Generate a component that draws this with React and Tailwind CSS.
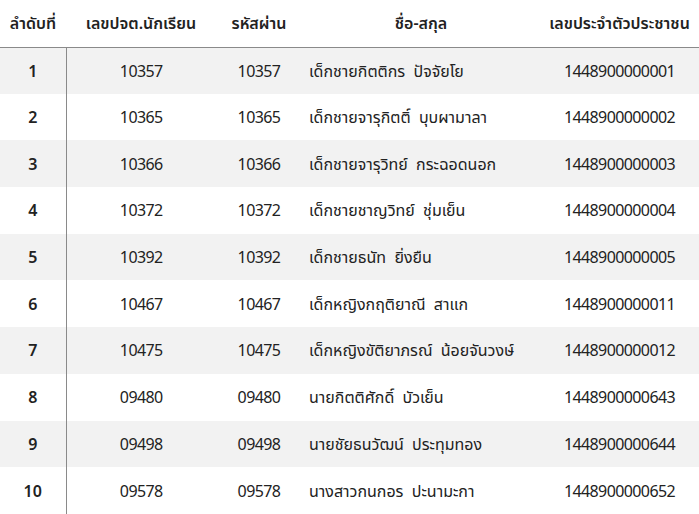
const rows = [
  ["1", "10357", "10357", "เด็กชายกิตติกร  ปัจจัยโย", "1448900000001"],
  ["2", "10365", "10365", "เด็กชายจารุกิตติ์  บุบผามาลา", "1448900000002"],
  ["3", "10366", "10366", "เด็กชายจารุวิทย์  กระฉอดนอก", "1448900000003"],
  ["4", "10372", "10372", "เด็กชายชาญวิทย์  ชุ่มเย็น", "1448900000004"],
  ["5", "10392", "10392", "เด็กชายธนัท  ยิ่งยืน", "1448900000005"],
  ["6", "10467", "10467", "เด็กหญิงกฤติยาณี  สาแก", "1448900000011"],
  ["7", "10475", "10475", "เด็กหญิงขัติยาภรณ์  น้อยจันวงษ์", "1448900000012"],
  ["8", "09480", "09480", "นายกิตติศักดิ์  บัวเย็น", "1448900000643"],
  ["9", "09498", "09498", "นายชัยธนวัฒน์  ประทุมทอง", "1448900000644"],
  ["10", "09578", "09578", "นางสาวกนกอร  ปะนามะกา", "1448900000652"],
];

export default function App() {
  return (
    <div className="w-[699px] h-[514px] overflow-hidden bg-white text-[#222] font-['Noto_Sans','Noto_Sans_Thai',sans-serif] text-[16px]">
      <table className="w-[699px] table-fixed border-collapse">
        <colgroup>
          <col className="w-[66px]" />
          <col className="w-[150px]" />
          <col className="w-[86px]" />
          <col className="w-[238px]" />
          <col className="w-[159px]" />
        </colgroup>
        <thead>
          <tr className="h-[47px] border-b border-[#8a8a8a]">
            <th className="font-semibold text-center">ลำดับที่</th>
            <th className="font-semibold text-center">เลขปจต.นักเรียน</th>
            <th className="font-semibold text-center">รหัสผ่าน</th>
            <th className="font-semibold text-center">ชื่อ-สกุล</th>
            <th className="font-semibold text-center">เลขประจำตัวประชาชน</th>
          </tr>
        </thead>
        <tbody>
          {rows.map((r, i) => (
            <tr key={r[0]} className={i % 2 === 0 ? "h-[46.7px] bg-[#f2f2f2]" : "h-[46.7px] bg-white"}>
              <td className="text-center font-semibold border-r border-[#8a8a8a]">{r[0]}</td>
              <td className="text-center tracking-[-0.6px]">{r[1]}</td>
              <td className="text-center tracking-[-0.6px]">{r[2]}</td>
              <td className="pl-[7px] whitespace-pre">{r[3]}</td>
              <td className="text-center tracking-[-0.6px]">{r[4]}</td>
            </tr>
          ))}
        </tbody>
      </table>
    </div>
  );
}
